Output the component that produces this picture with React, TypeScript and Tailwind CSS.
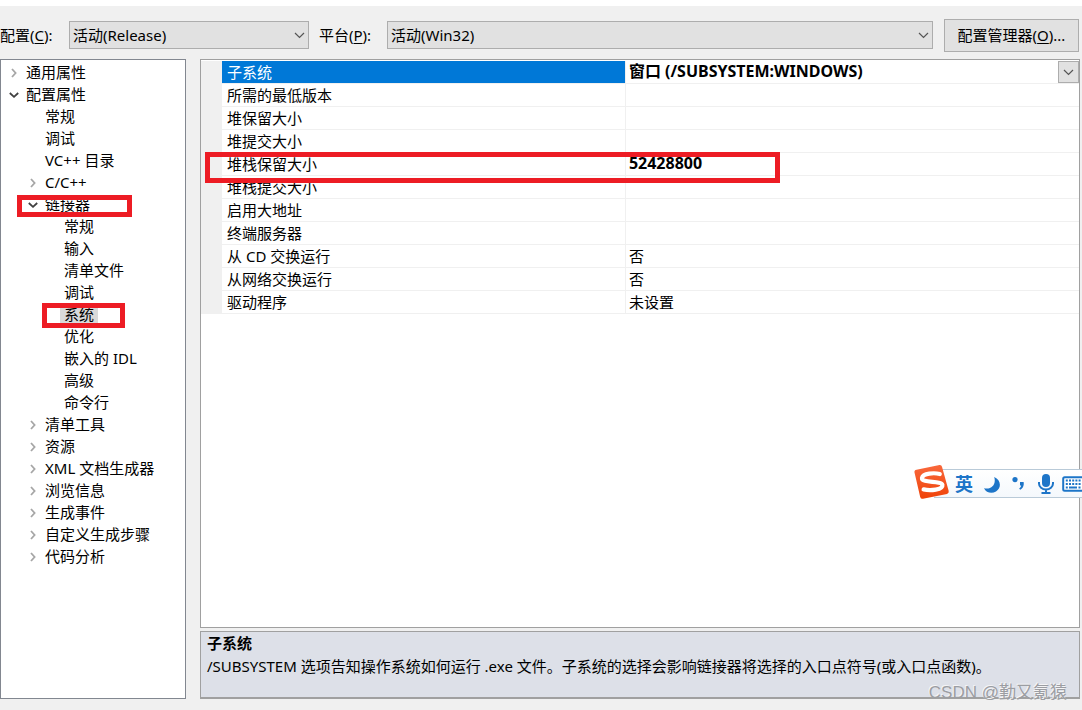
import React from "react";

type TreeItem = {
  label: string;
  level: 0 | 1 | 2;
  state?: "open" | "closed";
  selected?: boolean;
  mark?: string;
};

const tree: TreeItem[] = [
  { label: "通用属性", level: 0, state: "closed" },
  { label: "配置属性", level: 0, state: "open" },
  { label: "常规", level: 1 },
  { label: "调试", level: 1 },
  { label: "VC++ 目录", level: 1 },
  { label: "C/C++", level: 1, state: "closed" },
  { label: "链接器", level: 1, state: "open", mark: "left-4 top-0.5 h-[22px] w-[115px]" },
  { label: "常规", level: 2 },
  { label: "输入", level: 2 },
  { label: "清单文件", level: 2 },
  { label: "调试", level: 2 },
  { label: "系统", level: 2, selected: true, mark: "left-[41px] top-0 h-[25px] w-[83px]" },
  { label: "优化", level: 2 },
  { label: "嵌入的 IDL", level: 2 },
  { label: "高级", level: 2 },
  { label: "命令行", level: 2 },
  { label: "清单工具", level: 1, state: "closed" },
  { label: "资源", level: 1, state: "closed" },
  { label: "XML 文档生成器", level: 1, state: "closed" },
  { label: "浏览信息", level: 1, state: "closed" },
  { label: "生成事件", level: 1, state: "closed" },
  { label: "自定义生成步骤", level: 1, state: "closed" },
  { label: "代码分析", level: 1, state: "closed" },
];

const indent = { 0: "pl-[7px]", 1: "pl-[26px]", 2: "pl-[45px]" };

const rows: { name: string; value: string; bold?: boolean; marked?: boolean }[] = [
  { name: "所需的最低版本", value: "" },
  { name: "堆保留大小", value: "" },
  { name: "堆提交大小", value: "" },
  { name: "堆栈保留大小", value: "52428800", bold: true, marked: true },
  { name: "堆栈提交大小", value: "" },
  { name: "启用大地址", value: "" },
  { name: "终端服务器", value: "" },
  { name: "从 CD 交换运行", value: "否" },
  { name: "从网络交换运行", value: "否" },
  { name: "驱动程序", value: "未设置" },
];

function DownArrow() {
  return (
    <svg width="11" height="7" viewBox="0 0 11 7" fill="none" stroke="#555" strokeWidth="1.2" aria-hidden="true">
      <path d="M1 1l4.5 4.5L10 1" />
    </svg>
  );
}

function Combo({ id, value, className }: { id: string; value: string; className: string }) {
  return (
    <div className={`relative ${className}`}>
      <select
        id={id}
        className="block h-7 w-full appearance-none border border-[#adadad] bg-[#e1e1e1] pl-[3px] pr-6 leading-5 outline-none"
      >
        <option>{value}</option>
      </select>
      <span className="pointer-events-none absolute inset-y-0 right-1 flex items-center">
        <DownArrow />
      </span>
    </div>
  );
}

function TreeRow({ item }: { item: TreeItem }) {
  return (
    <li className={`relative flex h-[22px] items-center ${indent[item.level]}`}>
      <span className="flex w-3 shrink-0 justify-center pt-0.5">
        {item.state === "closed" && (
          <svg width="6" height="10" viewBox="0 0 6 10" fill="none" stroke="#a6a6a6" strokeWidth="1.8" aria-hidden="true">
            <path d="M1 1l3.6 4L1 9" />
          </svg>
        )}
        {item.state === "open" && (
          <svg width="10" height="6" viewBox="0 0 10 6" fill="none" stroke="#404040" strokeWidth="1.8" aria-hidden="true">
            <path d="M.8 1L5 4.8 9.2 1" />
          </svg>
        )}
      </span>
      <button
        type="button"
        className={`ml-0.5 h-[22px] whitespace-nowrap px-1 text-left leading-[22px] ${item.selected ? "bg-[#d9d9d9]" : ""}`}
      >
        {item.label}
      </button>
      {item.mark && (
        <span className={`pointer-events-none absolute z-10 border-[5px] border-[#ed1c24] ${item.mark}`} />
      )}
    </li>
  );
}

function InputMethodBar() {
  return (
    <div className="absolute right-0 top-[458px] z-20 flex h-9 w-[168px] items-center overflow-hidden">
      <div className="absolute inset-x-0 bottom-[2px] left-5 top-[5px] border-y border-[#b9cad8] bg-gradient-to-b from-white to-[#f4f8fc]" />
      <svg className="absolute left-0 top-0" width="36" height="36" viewBox="0 0 36 36" aria-hidden="true">
        <defs>
          <linearGradient id="sogou" x1="0" y1="0" x2="0" y2="1">
            <stop offset="0" stopColor="#f9683c" />
            <stop offset="1" stopColor="#ef4309" />
          </linearGradient>
        </defs>
        <path
          d="M2.5 5.8L25.5 1Q27.5.7 28 2.7L34.7 27Q35.2 29.2 33 29.9L9 34.8Q6.8 35.2 6.2 33L.5 8.5Q0 6.3 2.5 5.8Z"
          fill="url(#sogou)"
        />
        <path
          d="M25.8 10C20.5 8.6 9 9 8 14C7.3 19.5 27 16.3 28.4 20.8C29.2 26 16 27 9.6 25.4"
          fill="none"
          stroke="#fff"
          strokeWidth="4.2"
          strokeLinecap="round"
        />
      </svg>
      <span className="absolute left-[41px] top-[10px] text-lg font-bold leading-5 text-[#1d75c8]">英</span>
      <svg className="absolute left-[69px] top-[12px]" width="18" height="18" viewBox="0 0 18 18" fill="#1d75c8" aria-hidden="true">
        <path d="M11.2 1C18 3.8 18.8 11.8 13 15.5C8.5 18.2 3 16.5 1 12.2C8 14.2 13.6 8.5 11.2 1Z" />
      </svg>
      <svg className="absolute left-[97px] top-[12px]" width="15" height="17" viewBox="0 0 15 17" fill="#1d75c8" aria-hidden="true">
        <circle cx="4" cy="3.6" r="2.6" />
        <path d="M9 6h3.6c.7 3.4-.7 6.5-3.5 7.8l-.9-1.3c1.3-.8 1.9-1.7 1.9-2.9H9z" />
      </svg>
      <svg className="absolute left-[123px] top-[9px]" width="18" height="22" viewBox="0 0 18 22" aria-hidden="true">
        <rect x="5" y="1" width="8" height="13" rx="4" fill="#1d75c8" />
        <path d="M2 9v1.5a7 6 0 0014 0V9M9 16v4M4.5 20h9" fill="none" stroke="#1d75c8" strokeWidth="2" />
      </svg>
      <svg className="absolute left-[148px] top-[12px]" width="22" height="16" viewBox="0 0 22 16" fill="none" stroke="#1d75c8" aria-hidden="true">
        <rect x="1.2" y="1.2" width="20" height="13.6" rx="1.5" strokeWidth="2" fill="#fff" />
        <path d="M3.8 4.6h15M3.8 8h15" strokeWidth="2" strokeDasharray="2 1.2" />
        <path d="M3.8 11.5h2M7 11.5h8M16.5 11.5h2" strokeWidth="2" />
      </svg>
    </div>
  );
}

export default function App() {
  return (
    <div className="relative flex min-h-screen flex-col overflow-hidden border-t-[6px] border-white bg-[#f0f0f0] font-['Noto_Sans','Noto_Sans_CJK_SC',sans-serif] text-[15px] leading-[22px] text-black">
      <header className="flex h-[53px] items-center pb-[3px] pr-[3px] pt-2">
        <label htmlFor="config" className="w-[69px] shrink-0 whitespace-nowrap">
          配置(<u className="underline-offset-2">C</u>):
        </label>
        <Combo id="config" value="活动(Release)" className="w-60 shrink-0" />
        <label htmlFor="platform" className="w-[78px] shrink-0 whitespace-nowrap pl-2.5">
          平台(<u className="underline-offset-2">P</u>):
        </label>
        <Combo id="platform" value="活动(Win32)" className="flex-1" />
        <button
          type="button"
          className="ml-[11px] h-[33px] w-[135px] shrink-0 whitespace-nowrap border border-[#adadad] bg-[#e1e1e1]"
        >
          配置管理器(<u className="underline-offset-2">O</u>)...
        </button>
      </header>

      <main className="flex flex-1 gap-3.5 pb-[11px] pr-0.5">
        <nav aria-label="属性" className="w-[186px] shrink-0 border border-[#828790] bg-white pt-px">
          <ul>
            {tree.map((item, i) => (
              <TreeRow key={i} item={item} />
            ))}
          </ul>
        </nav>

        <div className="flex min-w-0 flex-1 flex-col gap-[3px]">
          <section className="flex-1 border border-[#a0a0a0] bg-white pt-px">
            <table className="w-full table-fixed border-separate border-spacing-0">
              <colgroup>
                <col className="w-[21px]" />
                <col className="w-[46%]" />
                <col />
              </colgroup>
              <tbody>
                <tr className="h-[23px]">
                  <td className="bg-[#f0f0f0] p-0" />
                  <th scope="row" className="border-b border-r border-[#f0f0f0] bg-[#0078d7] bg-clip-padding p-0 text-left font-normal text-white">
                    <label htmlFor="subsystem" className="block pl-[5px]">子系统</label>
                  </th>
                  <td className="border-b border-[#f0f0f0] p-0">
                    <div className="relative">
                      <select
                        id="subsystem"
                        className="block h-[22px] w-full appearance-none bg-white pb-0.5 pl-[3px] pr-6 text-base font-bold leading-5 outline-none"
                      >
                        <option>窗口 (/SUBSYSTEM:WINDOWS)</option>
                      </select>
                      <span className="pointer-events-none absolute inset-y-0 right-0 flex w-[21px] items-center justify-center border border-[#adadad] bg-[#e1e1e1]">
                        <DownArrow />
                      </span>
                    </div>
                  </td>
                </tr>
                {rows.map((row) => (
                  <tr key={row.name} className="h-[23px]">
                    <td className="bg-[#f0f0f0] p-0">
                      {row.marked && (
                        <div className="relative">
                          <span className="pointer-events-none absolute -top-[13px] left-1 z-10 h-[31px] w-[575px] border-[5px] border-[#ed1c24]" />
                        </div>
                      )}
                    </td>
                    <th scope="row" className="border-b border-r border-[#f0f0f0] py-0 pl-[5px] pr-0 text-left font-normal">
                      {row.name}
                    </th>
                    <td className={`border-b border-[#f0f0f0] pl-[3px] pr-0 pt-0 ${row.bold ? "pb-0.5 text-base font-bold leading-5" : "pb-0"}`}>
                      {row.value}
                    </td>
                  </tr>
                ))}
              </tbody>
            </table>
          </section>

          <section className="h-[68px] border border-b-2 border-[#a0a0a0] bg-[#dde0e8] pl-1.5">
            <h2 className="font-bold">子系统</h2>
            <p className="whitespace-nowrap pt-px">
              /SUBSYSTEM 选项告知操作系统如何运行 .exe 文件。子系统的选择会影响链接器将选择的入口点符号(或入口点函数)。
            </p>
          </section>
        </div>
      </main>

      <InputMethodBar />
      <div className="pointer-events-none absolute bottom-[6px] right-[15px] whitespace-nowrap font-['Liberation_Sans','Noto_Sans_CJK_SC',sans-serif] text-[17px] text-[#9b9da2] [text-shadow:-1px_-1px_0_#f4f4f6]">
        CSDN @勤又氪猿
      </div>
    </div>
  );
}
